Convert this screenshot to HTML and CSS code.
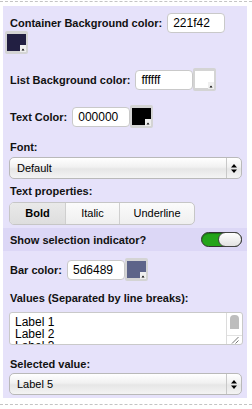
FILE: index.html
```html
<!DOCTYPE html>
<html>
<head>
    <title>Widget properties</title>
    <link rel="stylesheet" href="styles.css">
</head>
<body>

<div class="sep"></div>

<div class="panel">

    <div class="color-row first">
        <label class="lbl">Container Background color:</label>
        <span class="input">221f42</span>
        <span class="swatch">
            <svg width="23" height="23" viewBox="0 0 23 23">
                <rect x="0" y="0" width="23" height="23" rx="2" fill="#d4d4d4"/>
                <path d="M2 3 H21 V14 H15 V20 H2 Z" fill="#221f42"/>
                <rect x="15" y="14" width="6" height="7" fill="#efefef"/>
                <path d="M16.5 19.5 L18 17.5 L19.5 19.5 Z" fill="#000"/>
            </svg>
        </span>
    </div>

    <div class="color-row">
        <label class="lbl">List Background color:</label>
        <span class="input">ffffff</span>
        <span class="swatch">
            <svg width="23" height="23" viewBox="0 0 23 23">
                <rect x="0" y="0" width="23" height="23" rx="2" fill="#d4d4d4"/>
                <path d="M2 3 H21 V14 H15 V20 H2 Z" fill="#ffffff"/>
                <rect x="15" y="14" width="6" height="7" fill="#efefef"/>
                <path d="M16.5 19.5 L18 17.5 L19.5 19.5 Z" fill="#000"/>
            </svg>
        </span>
    </div>

    <div class="color-row">
        <label class="lbl">Text Color:</label>
        <span class="input">000000</span>
        <span class="swatch">
            <svg width="23" height="23" viewBox="0 0 23 23">
                <rect x="0" y="0" width="23" height="23" rx="2" fill="#d4d4d4"/>
                <path d="M2 3 H21 V14 H15 V20 H2 Z" fill="#000000"/>
                <rect x="15" y="14" width="6" height="7" fill="#efefef"/>
                <path d="M16.5 19.5 L18 17.5 L19.5 19.5 Z" fill="#000"/>
            </svg>
        </span>
    </div>

    <div class="lbl block font-lbl">Font:</div>
    <div class="select">
        <span class="value">Default</span>
        <span class="arrows">
            <svg width="6" height="9" viewBox="0 0 6 9">
                <path d="M0 3.5 L3 0 L6 3.5 Z M0 5.5 L3 9 L6 5.5 Z" fill="#000"/>
            </svg>
        </span>
    </div>

    <div class="lbl block props-lbl">Text properties:</div>
    <div class="seg">
        <span class="seg-btn on bold">Bold</span>
        <span class="seg-btn italic">Italic</span>
        <span class="seg-btn under">Underline</span>
    </div>

    <div class="hl-row">
        <span class="lbl">Show selection indicator?</span>
        <span class="toggle"><span class="knob"></span></span>
    </div>

    <div class="color-row bar-row">
        <label class="lbl">Bar color:</label>
        <span class="input">5d6489</span>
        <span class="swatch">
            <svg width="23" height="23" viewBox="0 0 23 23">
                <rect x="0" y="0" width="23" height="23" rx="2" fill="#d4d4d4"/>
                <path d="M2 3 H21 V14 H15 V20 H2 Z" fill="#5d6489"/>
                <rect x="15" y="14" width="6" height="7" fill="#efefef"/>
                <path d="M16.5 19.5 L18 17.5 L19.5 19.5 Z" fill="#000"/>
            </svg>
        </span>
    </div>

    <div class="lbl block values-lbl">Values (Separated by line breaks):</div>
    <div class="textarea">
        <textarea class="lines" readonly>Label 1
Label 2
Label 3
Label 4
Label 5</textarea>
        <div class="scroll">
            <div class="track"><div class="thumb"></div></div>
            <div class="grip">
                <svg width="14" height="8" viewBox="0 0 14 8">
                    <path d="M5 7.5 L11.5 1 M8.5 7.5 L11.5 4.5" stroke="#777" stroke-width="1"/>
                </svg>
            </div>
        </div>
    </div>

    <div class="lbl block sel-lbl">Selected value:</div>
    <div class="select">
        <span class="value">Label 5</span>
        <span class="arrows">
            <svg width="6" height="9" viewBox="0 0 6 9">
                <path d="M0 3.5 L3 0 L6 3.5 Z M0 5.5 L3 9 L6 5.5 Z" fill="#000"/>
            </svg>
        </span>
    </div>

</div>

<div class="sep bottom"></div>

</body>
</html>
```

FILE: styles.css
```css
BODY {
    margin : 0;
    font-family : "Liberation Sans", Arial, Helvetica, sans-serif;
    color : #111;
}
.sep {
    margin-top : 1px;
    border-top : 1px dashed #c4c4c4;
}
.sep.bottom {
    margin-top : 6px;
}
.panel {
    margin : 4px 5px 0 3px;
    padding : 7px 5px 3px 6px;
    background-color : #e6e2fa;
}
.lbl {
    font-size : 11px;
    font-weight : bold;
    line-height : 14px;
    margin-left : 1px;
}
.lbl.block {
    display : block;
}

/* colour pickers */
.color-row {
    display : flex;
    flex-wrap : wrap;
    align-items : center;
    margin-top : 14px;
}
.color-row.first {
    margin-top : 0;
}
.color-row .lbl {
    margin-right : 5px;
}
.input {
    box-sizing : border-box;
    width : 58px;
    height : 20px;
    padding : 0 5px;
    border : 1px solid #c9c9c9;
    border-radius : 4px;
    background-color : #fff;
    font-size : 12px;
    line-height : 18px;
    color : #000;
}
.swatch {
    display : block;
    width : 23px;
    height : 23px;
}
.swatch SVG {
    display : block;
}
.color-row.first .swatch {
    margin : -2px 0 0 -4px;
}
.color-row.bar-row {
    margin-top : 7px;
}

/* selects */
.font-lbl {
    margin-top : 12px;
    margin-bottom : 3px;
}
.select {
    box-sizing : border-box;
    display : flex;
    height : 22px;
    border : 1px solid #b9b9b9;
    border-radius : 5px;
    background : linear-gradient(#ffffff, #f1f1f1 45%, #e6e6e6 55%, #f4f4f4);
    font-size : 11px;
    color : #000;
}
.select .value {
    flex : 1;
    padding-left : 7px;
    line-height : 20px;
}
.select .arrows {
    width : 14px;
    border-left : 1px solid #c8c8c8;
    display : flex;
    align-items : center;
    justify-content : center;
}
.select .arrows SVG {
    display : block;
}

/* segmented control */
.props-lbl {
    margin-top : 5px;
    margin-bottom : 4px;
}
.seg {
    display : flex;
    width : 186px;
    height : 23px;
    box-sizing : border-box;
    border : 1px solid #c6c6c6;
    border-radius : 5px;
    overflow : hidden;
    background : linear-gradient(#fbfbfb, #efefef);
    font-size : 11px;
    color : #000;
}
.seg-btn {
    text-align : center;
    line-height : 21px;
    border-left : 1px solid #cfcfcf;
}
.seg-btn.bold {
    width : 55px;
    border-left : none;
    font-weight : bold;
}
.seg-btn.italic {
    width : 53px;
}
.seg-btn.under {
    flex : 1;
}
.seg-btn.on {
    background : linear-gradient(#e9e9e9, #dedede);
}

/* highlighted row with switch */
.hl-row {
    display : flex;
    align-items : center;
    justify-content : space-between;
    height : 23px;
    margin : 3px -5px 0 -6px;
    padding : 0 5px 0 6px;
    background-color : #dcd7f6;
}
.toggle {
    box-sizing : border-box;
    position : relative;
    width : 41px;
    height : 15px;
    border : 1px solid #333;
    border-radius : 8px;
    background-color : #23a41a;
    box-shadow : inset 0 1px 1px rgba(0,0,0,0.3);
}
.knob {
    position : absolute;
    top : -1px;
    right : -1px;
    width : 24px;
    height : 15px;
    box-sizing : border-box;
    border : 1px solid #444;
    border-radius : 8px;
    background : linear-gradient(#ffffff, #e2e2e2);
}

/* textarea */
.values-lbl {
    margin-top : 10px;
    margin-bottom : 7px;
}
.textarea {
    box-sizing : border-box;
    display : flex;
    width : 234px;
    height : 33px;
    border : 1px solid #c9c9c9;
    border-radius : 3px;
    background-color : #fff;
    overflow : hidden;
}
.textarea .lines {
    flex : 1;
    margin : 0;
    padding : 3px 5px;
    border : none;
    outline : none;
    resize : none;
    overflow : hidden;
    background : transparent;
    font-family : "Liberation Sans", Arial, Helvetica, sans-serif;
    font-size : 12px;
    line-height : 12px;
    color : #000;
}
.textarea .scroll {
    width : 15px;
    border-left : 1px solid #dcdcdc;
    display : flex;
    flex-direction : column;
}
.scroll .track {
    flex : 1;
    padding : 2px 3px 0 3px;
}
.scroll .thumb {
    height : 14px;
    border-radius : 4px 4px 0 0;
    background-color : #bdbdbd;
}
.scroll .grip {
    height : 8px;
    border-top : 1px solid #e2e2e2;
}
.scroll .grip SVG {
    display : block;
}
.sel-lbl {
    margin-top : 12px;
    margin-bottom : 2px;
}
```
